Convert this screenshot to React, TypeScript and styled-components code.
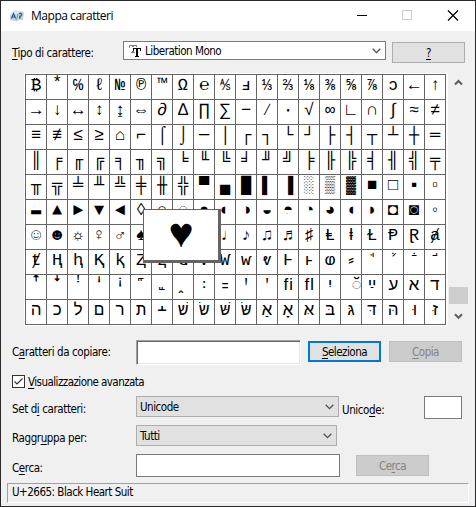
import React from "react";
import styled, { createGlobalStyle, css } from "styled-components";

const GlobalStyle = createGlobalStyle`
  *, *::before, *::after { box-sizing: border-box; }
  body { margin: 0; background: #f0f0f0; }
`;

const uiFont = css`
  font: 11.5px/16px "DejaVu Sans Condensed", "DejaVu Sans", sans-serif;
  font-stretch: condensed;
`;

const Window = styled.main`
  width: 476px;
  height: 507px;
  overflow: hidden;
  display: flex;
  flex-direction: column;
  background: #f0f0f0;
  border: 1px solid #2a2a2c;
  color: #000;
  ${uiFont}
  white-space: nowrap;
`;

const TitleBar = styled.header`
  height: 30px;
  flex: none;
  display: flex;
  align-items: center;
  background: #fff;
  padding-left: 8px;
`;

const Title = styled.h1`
  margin: 0 auto 0 6px;
  font: 12px/16px "Open Sans", sans-serif;
  letter-spacing: -0.47px;
`;

const WindowControls = styled.svg`
  width: 118px;
  height: 30px;
  fill: none;
`;

const Row = styled.div<{ $h: number }>`
  height: ${(p) => p.$h}px;
  flex: none;
  display: flex;
  align-items: flex-start;
  padding-left: 11px;
`;

const Label = styled.label<{ $w: number; $top: number; $track?: number; $indent?: number }>`
  width: ${(p) => p.$w}px;
  flex: none;
  margin-top: ${(p) => p.$top}px;
  padding-left: ${(p) => p.$indent ?? 0}px;
  letter-spacing: ${(p) => p.$track ?? -0.4}px;
`;

const Key = styled.span`
  text-decoration: underline;
  text-underline-offset: 2px;
  text-decoration-thickness: 1px;
  text-decoration-skip-ink: none;
`;

const Select = styled.div<{ $w: number; $h: number; $top: number; $light?: boolean }>`
  width: ${(p) => p.$w}px;
  height: ${(p) => p.$h}px;
  margin-top: ${(p) => p.$top}px;
  flex: none;
  display: flex;
  align-items: center;
  padding: 0 4px 0 3px;
  border: 1px solid ${(p) => (p.$light ? "#7a7a7a" : "#adadad")};
  background: ${(p) => (p.$light ? "#fff" : "#e1e1e1")};
`;

const SelectText = styled.span<{ $indent?: number }>`
  flex: 1;
  padding-left: ${(p) => p.$indent ?? 0}px;
  letter-spacing: -0.48px;
`;

const Field = styled.div<{ $w: number; $h: number; $top: number; $sunken?: boolean }>`
  width: ${(p) => p.$w}px;
  height: ${(p) => p.$h}px;
  margin-top: ${(p) => p.$top}px;
  flex: none;
  background: #fff;
  border: 1px solid #7a7a7a;
  ${(p) =>
    p.$sunken &&
    css`
      border-color: #a0a0a0 #fff #fff #a0a0a0;
      box-shadow: inset 1px 1px #696969, inset -1px -1px #e3e3e3;
    `}
`;

const Button = styled.button<{ $left: number; $top: number; $primary?: boolean }>`
  width: 73px;
  height: 21px;
  flex: none;
  margin: ${(p) => p.$top}px 0 0 ${(p) => p.$left}px;
  padding: 0;
  ${uiFont}
  letter-spacing: -0.5px;
  color: #000;
  background: #e1e1e1;
  border: ${(p) => (p.$primary ? "2px solid #0078d7" : "1px solid #adadad")};
  &:disabled {
    color: #838383;
    background: #ccc;
    border-color: #bfbfbf;
  }
`;

const CheckIcon = styled.svg`
  width: 13px;
  height: 13px;
  margin: 8px 3px 0 0;
  flex: none;
`;

const GridArea = styled.section`
  display: flex;
  height: 253px;
  flex: none;
  padding-left: 23px;
`;

const GridFrame = styled.div`
  position: relative;
  width: 424px;
  height: 253px;
  padding: 1px;
  background: #fff;
`;

const CharGrid = styled.div`
  width: 421px;
  height: 251px;
  display: grid;
  grid-template-columns: repeat(20, 20px);
  grid-auto-rows: 24px;
  gap: 1px;
  padding: 1px;
  background: #646464;
`;

const Cell = styled.span`
  background: #fff;
  overflow: hidden;
  display: flex;
  justify-content: center;
  padding-top: 1px;
  font: 17px/19px "Liberation Mono", monospace;
`;

const CarrierMark = styled.span`
  margin-left: 11px;
`;

const Magnifier = styled.div`
  position: absolute;
  left: 119px;
  top: 136px;
  width: 78px;
  height: 54px;
  border: 1px solid #646464;
  border-width: 1px 3px 3px 1px;
  background: #fff;
  display: flex;
  justify-content: center;
  font: 42px/52px "Liberation Mono", monospace;
`;

const Scrollbar = styled.div`
  width: 19px;
  height: 251px;
  margin-left: 1px;
  display: flex;
  flex-direction: column;
  align-items: center;
  padding: 6px 0 4px;
`;

const Thumb = styled.div`
  width: 19px;
  height: 17px;
  margin: auto 0 9px;
  background: #cdcdcd;
`;

const StatusBar = styled.footer`
  width: 462px;
  height: 20px;
  margin: 0 0 0 6px;
  flex: none;
  padding-left: 4px;
  line-height: 16px;
  letter-spacing: -0.5px;
  border: 1px solid;
  border-color: #a0a0a0 #fff #fff #a0a0a0;
`;

const Chevron = () => (
  <svg width="9" height="6" viewBox="0 0 9 6" fill="none">
    <path d="M.7 .8 4.5 4.6 8.3 .8" stroke="#505050" strokeWidth="1.3" />
  </svg>
);

const ScrollArrow = ({ down }: { down?: boolean }) => (
  <svg width="9" height="7" viewBox="0 0 9 7" fill="none">
    <path d={down ? "M1 1.2 4.5 4.8 8 1.2" : "M1 5.5 4.5 1.9 8 5.5"} stroke="#606060" strokeWidth="2.1" />
  </svg>
);

const AppIcon = () => (
  <svg width="16" height="16" viewBox="0 0 16 16">
    <path d="M2 5 6 2.5 13 3 15 5 14 12 10 12 8 13.5 1 12 0.8 9Z" fill="#c4d3e3" />
    <path d="M2 5 6 2.5 13 3 15 5 11 4.5 7 6 2 7Z" fill="#dce7f1" />
    <path d="M2.5 10.5 4.5 5.5 6.7 10.5M3.2 9h3" stroke="#36549a" strokeWidth="1.2" fill="none" />
    <path d="M7.5 11.5 9 6" stroke="#8297af" strokeWidth="1" />
    <path d="M10 5.7q3-1.3 2.6 1.2-.3 1.3-1.8 1.5v2.4" stroke="#307a50" strokeWidth="1.5" fill="none" />
  </svg>
);

const TrueTypeIcon = () => (
  <svg width="14" height="14" viewBox="0 0 14 14" shapeRendering="crispEdges">
    <path d="M2 1h8v3H9V2H7v6h1v1H4V8h1V2H3v2H2Z" fill="#808080" />
    <path d="M5 3h9v4H5Z" fill="#fff" />
    <path d="M6 4h8v3h-1V5h-2v7h1v1H8v-1h1V5H7v2H6Z" fill="#000" />
  </svg>
);

const rows: string[][] = [
  "\u20bf|\u20f0|℅|ℓ|№|℗|™|\u2126|℮|⅍|ⅎ|⅓|⅔|⅛|⅜|⅝|⅞|ↄ|←|↑",
  "→|↓|↔|↕|↨|⇔|∂|∆|∏|∑|−|∕|∙|√|∞|∟|∩|∫|≈|≠",
  "≡|≢|≤|≥|⌂|⌐|⌠|⌡|─|│|┌|┐|└|┘|├|┤|┬|┴|┼|═",
  "║|╒|╓|╔|╕|╖|╗|╘|╙|╚|╛|╜|╝|╞|╟|╠|╡|╢|╣|╤",
  "╥|╦|╧|╨|╩|╪|╫|╬|▀|▄|█|▌|▐|░|▒|▓|■|□|▪|▫",
  "▬|▲|►|▼|◄|◊|○|◌|●|◐|◑|◒|◓|◔|◕|◖|◗|◘|◙|◦",
  "☺|☻|☼|♀|♂|♠|♣|♥|♦|♩|♪|♫|♬|♯|\u2c60|\u2c61|\u2c62|\u2c63|\u2c64|\u2c65",
  "\u2c66|\u2c67|\u2c68|\u2c69|\u2c6a|\u2c6b|\u2c6c|\u2c6d|\u2c71|\u2c72|\u2c73|\u2c74|\u2c75|\u2c76|\u2c77|\u2e17|\ua717|\ua718|\ua719|\ua71a",
  "\ua71b|\ua71c|\ua71d|\ua71e|\ua71f|\ua720|\ua721|\ua788|\ua789|\ua78a|\ua78b|\ua78c|\ufb01|\ufb02|\ufb1d|\u25cc\ufb1e|\ufb1f|\ufb20|\ufb21|\ufb22",
  "\ufb23|\ufb24|\ufb25|\ufb26|\ufb27|\ufb28|\ufb29|\ufb2a|\ufb2b|\ufb2c|\ufb2d|\ufb2e|\ufb2f|\ufb30|\ufb31|\ufb32|\ufb33|\ufb34|\ufb35|\ufb36",
].map((line) => line.split("|"));

export default function App() {
  return (
    <>
      <GlobalStyle />
      <Window>
        <TitleBar>
          <AppIcon />
          <Title>Mappa caratteri</Title>
          <WindowControls viewBox="0 0 118 30" shapeRendering="crispEdges">
            <path d="M0 14.5h10" stroke="#000" />
            <path d="M45.500 9.500h9v9h-9z" stroke="#ccc" />
            <path d="M91 9.500 101 19.500M101 9.500 91 19.500" stroke="#000" strokeWidth="1.2" shapeRendering="auto" />
          </WindowControls>
        </TitleBar>

        <Row $h={42}>
          <Label $w={111} $top={14}><Key>T</Key>ipo di carattere:</Label>
          <Select $w={263} $h={19} $top={10} $light>
            <TrueTypeIcon />
            <SelectText $indent={4}>Liberation Mono</SelectText>
            <Chevron />
          </Select>
          <Button $left={6} $top={11}><Key>?</Key></Button>
        </Row>

        <GridArea>
          <GridFrame>
            <CharGrid>
              {rows.flat().map((char, i) => (
                <Cell key={i}>{char.length > 1 ? <CarrierMark>{char}</CarrierMark> : char}</Cell>
              ))}
            </CharGrid>
            <Magnifier>♥</Magnifier>
          </GridFrame>
          <Scrollbar>
            <ScrollArrow />
            <Thumb />
            <ScrollArrow down />
          </Scrollbar>
        </GridArea>

        <Row $h={41}>
          <Label $w={124} $top={18}>C<Key>a</Key>ratteri da copiare:</Label>
          <Field $w={165} $h={25} $top={14} $sunken />
          <Button $left={7} $top={15} $primary><Key>S</Key>eleziona</Button>
          <Button $left={8} $top={15} disabled><Key>C</Key>opia</Button>
        </Row>
        <Row $h={29}>
          <CheckIcon viewBox="0 0 13 13">
            <rect x=".5" y=".5" width="12" height="12" fill="#fff" stroke="#333" />
            <path d="M2.500 6.500 5 9 10.500 3.500" fill="none" stroke="#333" strokeWidth="1.2" />
          </CheckIcon>
          <Label $w={140} $top={7} $track={-0.55}><Key>V</Key>isualizzazione avanzata</Label>
        </Row>
        <Row $h={29}>
          <Label $w={124} $top={5}>Set d<Key>i</Key> caratteri:</Label>
          <Select $w={203} $h={21} $top={0}>
            <SelectText>Unicode</SelectText>
            <Chevron />
          </Select>
          <Label $w={85} $top={6} $indent={3}>Unico<Key>d</Key>e:</Label>
          <Field $w={38} $h={23} $top={0} />
        </Row>
        <Row $h={29}>
          <Label $w={124} $top={5}>Raggr<Key>u</Key>ppa per:</Label>
          <Select $w={201} $h={21} $top={0}>
            <SelectText>Tutti</SelectText>
            <Chevron />
          </Select>
        </Row>
        <Row $h={29}>
          <Label $w={124} $top={6}>C<Key>e</Key>rca:</Label>
          <Field $w={204} $h={23} $top={0} />
          <Button $left={16} $top={1} disabled>Ce<Key>r</Key>ca</Button>
        </Row>
        <StatusBar>U+2665: Black Heart Suit</StatusBar>
      </Window>
    </>
  );
}
